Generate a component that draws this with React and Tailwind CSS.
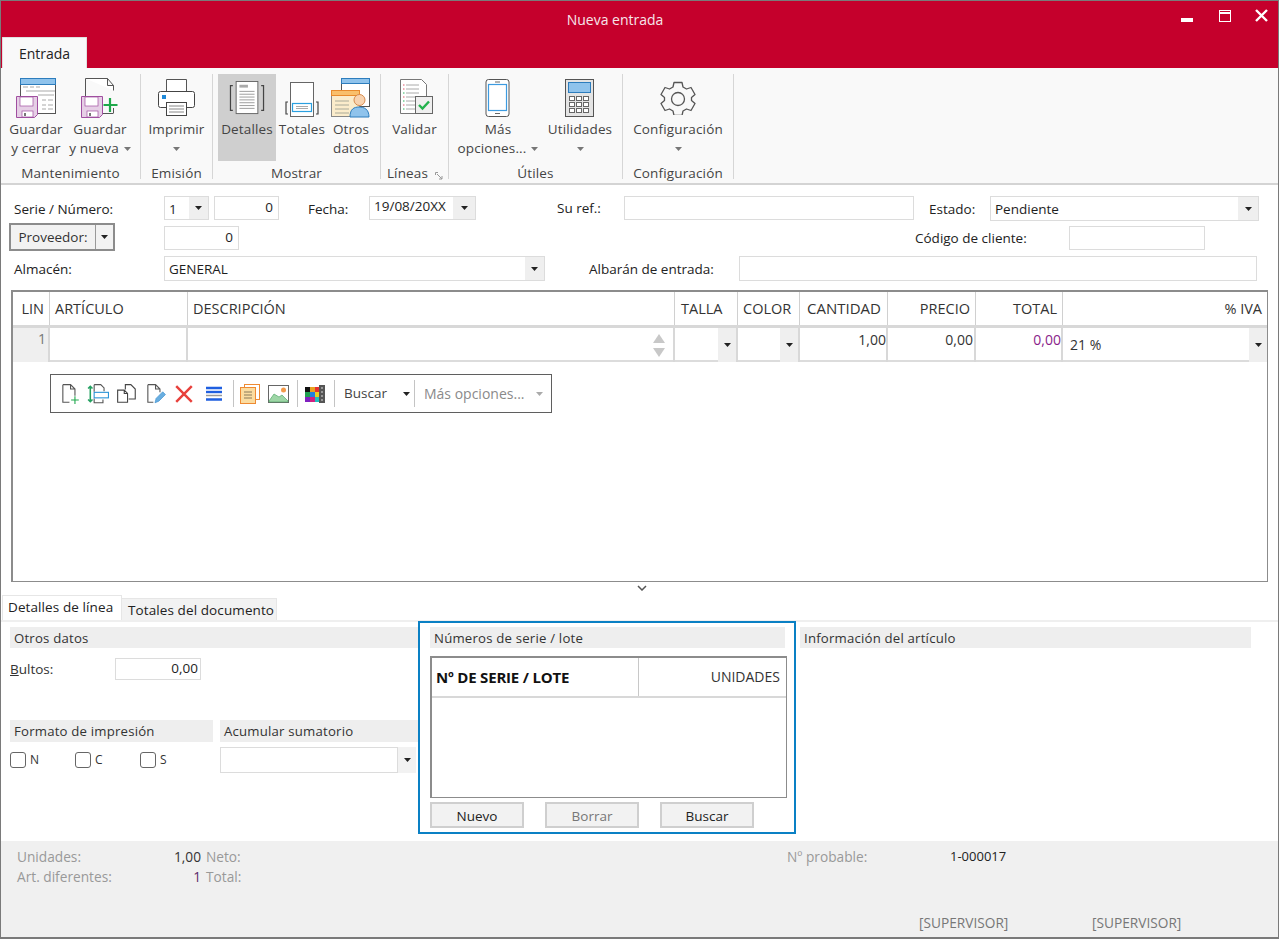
import React from 'react'

// Small arrow used by every combo box and ribbon button
function Caret({ className = 'fill-[#222]' }) {
  return (
    <svg width="7" height="4" viewBox="0 0 7 4" className={className}>
      <path d="M0 0h7L3.5 4z" />
    </svg>
  )
}

function Combo({ width, height = 'h-[25px]', text, box = 'w-[19px]', className = '', leading = 'leading-[25px]' }) {
  return (
    <div className={`flex ${width} ${height} border border-[#dcdcdc] bg-white ${className}`}>
      <span className={`flex-1 pl-[4px] ${leading} text-[#1e1e1e] whitespace-nowrap`}>{text}</span>
      <span className={`flex ${box} items-center justify-center bg-[#efefef]`}>
        <Caret />
      </span>
    </div>
  )
}

function Field({ width, height = 'h-[25px]', text, className = '' }) {
  return (
    <div className={`${width} ${height} border border-[#dcdcdc] bg-white pr-[5px] text-right leading-[21px] text-[#1e1e1e] ${className}`}>
      {text}
    </div>
  )
}

/* ---------- ribbon icons ---------- */
function Floppy({ x = 0, y = 0 }) {
  return (
    <g transform={`translate(${x} ${y})`}>
      <path d="M.5.5h21v18l-3 3H.5z" fill="#e6cfe6" stroke="#a04fa0" />
      <rect x="4" y="1" width="13" height="9" fill="#fff" stroke="#a04fa0" strokeWidth=".7" />
      <rect x="6" y="15" width="11" height="6" fill="#fff" stroke="#a04fa0" strokeWidth=".7" />
      <rect x="8" y="17" width="2" height="3" fill="#777" />
    </g>
  )
}

function IconSaveClose() {
  return (
    <svg width="40" height="42" viewBox="0 0 40 42">
      <rect x="4.5" y="1.5" width="35" height="35" fill="#fff" stroke="#555" />
      <rect x="4.5" y="1.5" width="35" height="6" fill="#8fc3ec" stroke="#2d7dbd" />
      <path d="M7 10h5M14 10h4M20 10h4M10 14h29M22 18h16M26 23h4M32 23h5M26 28h4M32 28h5M26 32h4M32 32h5" stroke="#aaa" strokeWidth="1.2" />
      <Floppy x="0" y="19" />
    </svg>
  )
}

function IconSaveNew() {
  return (
    <svg width="38" height="42" viewBox="0 0 38 42">
      <path d="M4.5 1.5h22l6 7v5M4.5 1.5v20M26.5 1.5v7h6" fill="#fff" stroke="#555" />
      <path d="M32.5 36.5H22M32.5 31v5" fill="none" stroke="#555" />
      <Floppy x="0" y="19" />
      <path d="M29 21v14M22.5 28h14" stroke="#1ea84a" strokeWidth="2.2" />
    </svg>
  )
}

function IconPrinter() {
  return (
    <svg width="40" height="40" viewBox="0 0 40 40">
      <path d="M9.5 14V1.5h20V14" fill="#fff" stroke="#555" />
      <rect x="1.5" y="13.5" width="36" height="16" rx="2" fill="#fff" stroke="#444" />
      <rect x="5" y="17" width="4" height="4" fill="#1e88d8" />
      <rect x="9.5" y="24.5" width="20" height="13" fill="#fff" stroke="#444" />
      <path d="M12 28h15M12 31h15M12 34h15" stroke="#888" />
    </svg>
  )
}

function IconDetails() {
  return (
    <svg width="36" height="34" viewBox="0 0 38 36">
      <path d="M4 5H1.5v26H4M34 5h2.5v26H34" fill="none" stroke="#444" strokeWidth="1.3" />
      <rect x="7.5" y=".5" width="23" height="34" fill="#fff" stroke="#666" />
      <rect x="11" y="4" width="9" height="3" fill="#aaa" />
      <path d="M11 11h16M11 14h16M11 17h16M11 20h16M11 23h16M11 26h16M11 29h16" stroke="#999" />
    </svg>
  )
}

function IconTotals() {
  return (
    <svg width="34" height="35" viewBox="0 0 34 35" className="mt-[3px]">
      <rect x="5.5" y=".5" width="23" height="34" fill="#fff" stroke="#666" />
      <path d="M3 20H1v12h2M31 20h2v12h-2" fill="none" stroke="#444" strokeWidth="1.2" />
      <rect x="7.5" y="21.5" width="19" height="8" fill="#fff" stroke="#2aa0e0" strokeWidth="1.2" />
      <path d="M11 24.500h12M11 26.500h12" stroke="#aaa" />
    </svg>
  )
}

function IconOther() {
  return (
    <svg width="40" height="40" viewBox="0 0 40 40">
      <rect x="10.500" y=".5" width="28" height="28" fill="#fff" stroke="#555" />
      <rect x="10.500" y=".5" width="28" height="5" fill="#8fc3ec" stroke="#2d7dbd" />
      <rect x=".5" y="12.500" width="28" height="26" fill="#fbeccb" stroke="#888" />
      <rect x=".5" y="12.500" width="28" height="5" fill="#f9bf6b" stroke="#e98a2c" />
      <path d="M4 23h14M4 27h14M4 31h14M4 35h14" stroke="#aa9" />
      <path d="M19 39c0-8 4-10 9-10s10 2 10 10z" fill="#8fc3ec" stroke="#2d7dbd" />
      <circle cx="28.500" cy="22" r="5.500" fill="#f8d3b0" stroke="#d68b4e" />
    </svg>
  )
}

function IconValidate() {
  return (
    <svg width="36" height="38" viewBox="0 0 36 38" className="ml-[3px]">
      <path d="M2.500.5h21l5 5V34.500h-26z" fill="#fff" stroke="#777" />
      <path d="M8 6h13M8 10h13M8 14h13M8 18h13M8 22h13M8 26h13M8 30h13" stroke="#aaa" />
      <path d="M5 6h1.500M5 10h1.500M5 18h1.500M5 26h1.500" stroke="#e0556a" />
      <path d="M5 14h1.500M5 22h1.500M5 30h1.500" stroke="#2fb45c" />
      <rect x="17.500" y="17.500" width="17" height="17" fill="#efefef" stroke="#666" />
      <path d="M21 26l3.500 3.500 6.500-7" fill="none" stroke="#22b14c" strokeWidth="2.400" />
    </svg>
  )
}

function IconTablet() {
  return (
    <svg width="26" height="38" viewBox="0 0 26 38">
      <rect x="1" y=".5" width="23" height="37" rx="2.500" fill="#fff" stroke="#555" />
      <rect x="3.500" y="5.500" width="18" height="26" fill="#fff" stroke="#3d9be0" strokeWidth="1.200" />
      <path d="M10 3h5M10 34.500h5" stroke="#666" />
    </svg>
  )
}

function IconCalc() {
  const keys = []
  for (let r = 0; r < 3; r++) {
    for (let c = 0; c < 3; c++) {
      keys.push(<rect key={`${r}-${c}`} x={4.500 + c * 7} y={17.500 + r * 6} width="5" height="4" fill="#fff" stroke="#666" />)
    }
  }
  return (
    <svg width="30" height="38" viewBox="0 0 30 38">
      <rect x=".5" y=".5" width="28" height="37" fill="#e4e4e4" stroke="#555" />
      <rect x="3.500" y="3.500" width="22" height="10" fill="#8fc3ec" stroke="#2d7dbd" />
      {keys}
    </svg>
  )
}

function IconGear() {
  return (
    <svg width="36" height="34" viewBox="0 0 36 34" fill="none" stroke="#555" strokeWidth="1.300">
      <path d="M14 1.500h8l1 4.500 3.500 2 4.500-1.500 4 7-3.500 3v3l3.500 3-4 7-4.500-1.500-3.500 2-1 4.500h-8l-1-4.500-3.500-2L5 29.500l-4-7 3.500-3v-3L1 13.500l4-7L9.500 8 13 6z" strokeLinejoin="round" />
      <circle cx="18" cy="18" r="6.500" />
    </svg>
  )
}

function RibbonButton({ icon, line1, line2, width, caret, active }) {
  return (
    <div className={`flex ${width} h-[87px] flex-col items-center ${active ? 'bg-[#cfcfcf]' : ''}`}>
      <div className="flex h-[44px] items-center justify-center pt-[3px]">{icon}</div>
      <div className="mt-[2px] leading-[19px] whitespace-nowrap text-[#444]">{line1}</div>
      <div className="flex h-[19px] items-center gap-[5px] leading-[19px] whitespace-nowrap text-[#444]">
        {line2 && <span>{line2}</span>}
        {caret && <Caret className="fill-[#777]" />}
      </div>
    </div>
  )
}

function RibbonGroup({ width, label, children, pad = '', noteIcon }) {
  return (
    <div className={`relative flex ${width} h-[105px] flex-col border-r border-[#d6d6d6]`}>
      <div className={`flex h-[88px] ${pad}`}>{children}</div>
      <div className="mt-[3px] text-center leading-[18px] text-[#444] whitespace-nowrap">{label}</div>
      {noteIcon && (
        <svg width="8" height="8" viewBox="0 0 8 8" className="absolute right-[5px] bottom-[-1px]" fill="none" stroke="#999">
          <path d="M.5 3V.5H3M2 2l5 5M7 4v3H4" />
        </svg>
      )}
    </div>
  )
}

function Ribbon() {
  return (
    <div className="flex h-[117px] border-b-2 border-[#d4d4d4] bg-[#f9f9f9] pt-[6px] text-[13.5px] tracking-[.15px]">
      <RibbonGroup width="w-[140px]" label="Mantenimiento" pad="pl-[3px]">
        <RibbonButton width="w-[64px]" icon={<IconSaveClose />} line1="Guardar" line2="y cerrar" />
        <RibbonButton width="w-[64px]" icon={<IconSaveNew />} line1="Guardar" line2="y nueva" caret />
      </RibbonGroup>
      <RibbonGroup width="w-[72px]" label="Emisión">
        <RibbonButton width="w-[71px]" icon={<IconPrinter />} line1="Imprimir" caret />
      </RibbonGroup>
      <RibbonGroup width="w-[168px]" label="Mostrar" pad="pl-[5px]">
        <RibbonButton width="w-[58px]" active icon={<IconDetails />} line1="Detalles" />
        <RibbonButton width="w-[52px]" icon={<IconTotals />} line1="Totales" />
        <RibbonButton width="w-[46px]" icon={<IconOther />} line1="Otros" line2="datos" />
      </RibbonGroup>
      <RibbonGroup width="w-[68px]" label={<span className="pr-[14px]">Líneas</span>} noteIcon>
        <RibbonButton width="w-[67px]" icon={<IconValidate />} line1="Validar" />
      </RibbonGroup>
      <RibbonGroup width="w-[174px]" label="Útiles" pad="pl-[6px]">
        <RibbonButton width="w-[86px]" icon={<IconTablet />} line1="Más" line2="opciones..." caret />
        <RibbonButton width="w-[78px]" icon={<IconCalc />} line1="Utilidades" caret />
      </RibbonGroup>
      <RibbonGroup width="w-[111px]" label="Configuración">
        <RibbonButton width="w-[110px]" icon={<IconGear />} line1="Configuración" caret />
      </RibbonGroup>
    </div>
  )
}

/* ---------- floating toolbar icons ---------- */
function ToolPage({ children }) {
  return (
    <svg width="22" height="22" viewBox="0 0 20 20" fill="none">
      {children}
    </svg>
  )
}

const pageOutline = 'M3.500 1.500h7l4 4v6M3.500 1.500v16h6M10.500 1.500v4h4'

function ToolSep({ className = '' }) {
  return <span className={`h-[27px] w-[1px] shrink-0 bg-[#c4c4c4] ${className}`} />
}

function LineToolbar() {
  return (
    <div className="ml-[37px] mt-[12px] flex h-[39px] w-[502px] items-center border border-[#5f5f5f] bg-white pl-[8px]">
      <ToolPage>
        <path d={pageOutline} stroke="#555" />
        <path d="M14.500 12v7M11 15.500h7" stroke="#22a94f" />
      </ToolPage>
      <span className="ml-[6px] flex">
        <ToolPage>
          <path d="M6.500 1.500h6l3 3v3M6.500 1.500V8M6.500 14v4h8v-3" stroke="#555" />
          <rect x="6.500" y="8.500" width="13" height="5" fill="#fff" stroke="#2d95d8" />
          <path d="M3 3v14M1 5l2-2 2 2M1 15l2 2 2-2" stroke="#22a060" strokeWidth="1.400" />
        </ToolPage>
      </span>
      <span className="ml-[7px] flex">
        <ToolPage>
          <path d="M1.500 6.500h6l3 3v8h-9zM7.500 6.500v3h3" stroke="#444" />
          <path d="M8.500 6V1.500h5l4 4v9h-6" stroke="#444" />
        </ToolPage>
      </span>
      <span className="ml-[6px] flex">
        <ToolPage>
          <path d="M3.500 1.500h7l4 4v3M3.500 1.500v16h5M10.500 1.500v4h4" stroke="#555" />
          <path d="M10 18l1-4 6-6 2.500 2.500-6 6z" fill="#69aee0" stroke="#3c8fd0" strokeWidth=".6" />
        </ToolPage>
      </span>
      <svg width="20" height="20" viewBox="0 0 18 18" className="ml-[8px]">
        <path d="M2 2l14 14M16 2L2 16" stroke="#e8413c" strokeWidth="2.200" />
      </svg>
      <svg width="18" height="18" viewBox="0 0 18 18" className="ml-[11px]">
        <path d="M1 3h16M1 14.500h16" stroke="#1f5fe0" strokeWidth="2.400" />
        <path d="M1 7h16" stroke="#1f5fe0" strokeWidth="2.400" />
        <path d="M1 10.500h16" stroke="#999" strokeWidth="1.500" />
      </svg>
      <ToolSep className="ml-[10px]" />
      <svg width="20" height="20" viewBox="0 0 20 20" className="ml-[6px]">
        <rect x="4.500" y=".5" width="15" height="15" fill="#fff" stroke="#ee8a32" />
        <rect x=".5" y="3.500" width="15" height="16" fill="#fbdca0" stroke="#ee8a32" />
        <path d="M4 8h8M4 11h8M4 14h8" stroke="#8a7a5a" />
      </svg>
      <svg width="21" height="18" viewBox="0 0 21 18" className="ml-[8px]">
        <rect x=".5" y=".5" width="20" height="17" fill="#fff" stroke="#666" />
        <path d="M1 16l5-7 5 3 3-2 6 6v1H1z" fill="#9ed6a6" stroke="#55a86a" strokeWidth=".7" />
        <circle cx="15.500" cy="5" r="2.500" fill="#f39a4a" />
      </svg>
      <ToolSep className="ml-[8px]" />
      <svg width="20" height="20" viewBox="0 0 20 20" className="ml-[7px]">
        <rect x="0" y="3" width="5" height="5" fill="#111" />
        <rect x="5" y="3" width="5" height="5" fill="#e8a020" />
        <rect x="10" y="3" width="4" height="5" fill="#e53030" />
        <rect x="0" y="8" width="5" height="5" fill="#20a050" />
        <rect x="5" y="8" width="5" height="5" fill="#2080e0" />
        <rect x="10" y="8" width="4" height="5" fill="#e8d020" />
        <rect x="0" y="13" width="5" height="5" fill="#8020c0" />
        <rect x="5" y="13" width="5" height="5" fill="#d02080" />
        <rect x="10" y="13" width="4" height="5" fill="#20c0c0" />
        <rect x="14" y="1" width="6" height="18" fill="#555" />
        <path d="M17 3v14" stroke="#ddd" strokeDasharray="2 2" />
      </svg>
      <ToolSep className="ml-[9px]" />
      <span className="ml-[9px] w-[59px] text-[13.500px] text-[#444]">Buscar</span>
      <span className="flex"><Caret /></span>
      <ToolSep className="ml-[4px]" />
      <span className="ml-[9px] w-[112px] text-[14px] whitespace-nowrap text-[#8a8a8a]">Más opciones...</span>
      <span className="flex"><Caret className="fill-[#aaa]" /></span>
    </div>
  )
}

/* ---------- lines grid ---------- */
const cols = 'grid-cols-[37px_138px_487px_63px_62px_88px_88px_87px_1fr]'

function HeadCell({ children, right, className = 'px-[5px]' }) {
  return (
    <div className={`overflow-hidden whitespace-nowrap border-r border-[#d0d0d0] leading-[33px] text-[#333] ${className} ${right ? 'text-right' : ''}`}>
      {children}
    </div>
  )
}

function LinesTable() {
  return (
    <div className="mx-[10px] mt-[9px] h-[292px] border-2 border-[#8c8c8c] border-b-[1px] border-r-[1px] bg-white text-[14px]">
      <div className={`grid h-[33px] ${cols} border-b-[3px] border-[#d8d8d8] box-content text-[14.500px]`}>
        <HeadCell right>LIN</HeadCell>
        <HeadCell>ARTÍCULO</HeadCell>
        <HeadCell>DESCRIPCIÓN</HeadCell>
        <HeadCell className="pl-[6px]">TALLA</HeadCell>
        <HeadCell>COLOR</HeadCell>
        <HeadCell className="pl-[7px] text-[15px]">CANTIDAD</HeadCell>
        <HeadCell right>PRECIO</HeadCell>
        <HeadCell right>TOTAL</HeadCell>
        <div className="px-[5px] text-right leading-[33px] text-[#333]">% IVA</div>
      </div>
      <div className={`grid h-[34px] ${cols} border-b-[2px] border-[#dcdcdc] text-[#333]`}>
        <div className="border-r-2 border-[#d8d8d8] bg-[#efefef] px-[2px] text-right leading-[21px] text-[#777]">1</div>
        <div className="border-r-2 border-[#d8d8d8]" />
        <div className="flex items-center justify-end border-r-2 border-[#d8d8d8] pr-[8px]">
          <div className="flex flex-col gap-[5px]">
            <svg width="12" height="9" viewBox="0 0 12 9" className="fill-[#c8c8c8]"><path d="M6 0l6 9H0z" /></svg>
            <svg width="12" height="9" viewBox="0 0 12 9" className="fill-[#c8c8c8]"><path d="M0 0h12L6 9z" /></svg>
          </div>
        </div>
        <div className="flex justify-end border-r-2 border-[#d8d8d8]">
          <span className="flex w-[18px] items-center justify-center bg-[#efefef]"><Caret /></span>
        </div>
        <div className="flex justify-end border-r-2 border-[#d8d8d8]">
          <span className="flex w-[18px] items-center justify-center bg-[#efefef]"><Caret /></span>
        </div>
        <div className="border-r-2 border-[#d8d8d8] text-right leading-[23px]">1,00</div>
        <div className="border-r-2 border-[#d8d8d8] pr-[1px] text-right leading-[23px]">0,00</div>
        <div className="border-r-2 border-[#d8d8d8] text-right leading-[23px] text-[#8a1e8a]">0,00</div>
        <div className="flex pl-[7px]">
          <span className="flex-1 leading-[34px]">21 %</span>
          <span className="flex w-[18px] items-center justify-center bg-[#efefef]"><Caret /></span>
        </div>
      </div>
      <LineToolbar />
    </div>
  )
}

function SectionTitle({ className = '', children }) {
  return <div className={`h-[21px] bg-[#eeeeee] pl-[4px] text-[13.200px] leading-[22px] text-[#333] tracking-[.2px] ${className}`}>{children}</div>
}

function CheckItem({ label, width }) {
  return (
    <div className={`flex ${width} items-center gap-[4px]`}>
      <span className="h-[16px] w-[16px] rounded-[3px] border border-[#666] bg-white" />
      <span className="text-[12px] text-[#333]">{label}</span>
    </div>
  )
}

function SerialButton({ children, disabled }) {
  return (
    <div className={`flex h-[26px] w-[94px] items-center justify-center border-2 border-[#cfcfcf] bg-[#f2f2f2] pt-[3px] ${disabled ? 'text-[#777]' : 'text-[#222]'}`}>
      {children}
    </div>
  )
}

function DetailPanels() {
  return (
    <div className="flex h-[220px]">
      <div className="ml-[9px] w-[408px] pt-[6px]">
        <SectionTitle>Otros datos</SectionTitle>
        <div className="mt-[10px] flex items-start">
          <span className="w-[105px] leading-[23px] text-[#333]"><span className="underline">B</span>ultos:</span>
          <Field width="w-[86px]" height="h-[22px]" text="0,00" className="!leading-[18px] !pr-[2px]" />
        </div>
        <div className="mt-[39px] flex gap-[7px]">
          <SectionTitle className="h-[22px] w-[203px]">Formato de impresión</SectionTitle>
          <SectionTitle className="h-[22px] w-[198px]">Acumular sumatorio</SectionTitle>
        </div>
        <div className="mt-[5px] flex">
          <div className="flex w-[210px] items-center">
            <CheckItem label="N" width="w-[65px]" />
            <CheckItem label="C" width="w-[65px]" />
            <CheckItem label="S" width="w-[65px]" />
          </div>
          <div className="flex h-[26px] w-[196px]">
            <div className="w-[178px] border border-[#dcdcdc] bg-white" />
            <span className="flex flex-1 items-center justify-center bg-[#f2f2f2]"><Caret /></span>
          </div>
        </div>
      </div>
      {/* highlighted block */}
      <div className="h-[213px] w-[378px] border-2 border-[#0a80c4] px-[10px] pt-[4px]">
        <SectionTitle className="w-[355px]">Números de serie / lote</SectionTitle>
        <div className="mt-[8px] h-[142px] w-[357px] border-2 border-[#8c8c8c] border-b-[1px] border-r-[1px] bg-white">
          <div className="flex h-[40px] border-b-2 border-[#d8d8d8] text-[14px] leading-[38px]">
            <div className="w-[207px] border-r border-[#c8c8c8] pl-[4px] text-[15px] font-bold text-[#111] tracking-[-.2px] whitespace-nowrap">Nº DE SERIE / LOTE</div>
            <div className="flex-1 pr-[6px] text-right text-[#333]">UNIDADES</div>
          </div>
        </div>
        <div className="mt-[4px] flex gap-[21px]">
          <SerialButton>Nuevo</SerialButton>
          <SerialButton disabled>Borrar</SerialButton>
          <SerialButton>Buscar</SerialButton>
        </div>
      </div>
      <div className="ml-[4px] w-[451px] pt-[6px]">
        <SectionTitle>Información del artículo</SectionTitle>
      </div>
    </div>
  )
}

function StatusBar() {
  return (
    <div className="flex h-[97px] flex-col bg-[#f0f0f0] pl-[16px] text-[13.700px] text-[#999]">
      <div className="mt-[6px] flex h-[20px] items-center">
        <span className="w-[130px]">Unidades:</span>
        <span className="w-[54px] text-right text-[#333]">1,00</span>
        <span className="ml-[5px] w-[581px]">Neto:</span>
        <span className="w-[163px]">Nº probable:</span>
        <span className="text-[13px] text-[#222]">1-000017</span>
      </div>
      <div className="flex h-[20px] items-center">
        <span className="w-[130px]">Art. diferentes:</span>
        <span className="w-[54px] text-right text-[#5a2a6a]">1</span>
        <span className="ml-[5px]">Total:</span>
      </div>
      <div className="mt-[27px] flex h-[18px] items-center pl-[902px] text-[#777]">
        <span className="w-[173px]">[SUPERVISOR]</span>
        <span>[SUPERVISOR]</span>
      </div>
    </div>
  )
}

export default function App() {
  return (
    <div className="h-[939px] w-[1279px] overflow-hidden border-x border-t border-b-2 border-[#7a7a7a] bg-white font-['Open_Sans','Noto_Sans',sans-serif] text-[13.500px]">
      {/* title bar */}
      <div className="relative h-[67px] bg-[#c5002c]">
        <div className="pt-[10px] pr-[49px] text-center text-[14px] leading-[18px] text-[#f6e6ea]">Nueva entrada</div>
        <div className="absolute top-[8px] right-[10px] flex items-center">
          <svg width="12" height="12" viewBox="0 0 12 12"><path d="M0 8h12v4H0z" fill="#fff" /></svg>
          <svg width="12" height="12" viewBox="0 0 12 12" fill="none" stroke="#fff" className="ml-[26px]"><rect x=".5" y=".5" width="11" height="11" /><path d="M0 3h12" strokeWidth="2" /></svg>
          <svg width="13" height="13" viewBox="0 0 13 13" className="ml-[24px]"><path d="M1 1l11 11M12 1L1 12" stroke="#fff" strokeWidth="2.400" /></svg>
        </div>
        <div className="absolute bottom-0 left-[1px] h-[31px] w-[85px] rounded-t-[1px] border border-b-0 border-[#e0e0e0] bg-[#f9f9f9] text-center text-[14px] leading-[31px] text-[#222]">
          Entrada
        </div>
      </div>

      <Ribbon />

      {/* header form */}
      <div className="px-[13px] pt-[11px] text-[#222]">
        <div className="flex h-[24px] items-start">
          <span className="w-[150px] leading-[27px]">Serie / Número:</span>
          <Combo width="w-[45px]" height="h-[24px]" text="1" leading="leading-[24px]" />
          <Field width="w-[65px]" height="h-[24px]" text="0" className="ml-[5px]" />
          <span className="ml-[29px] w-[61px] leading-[27px]">Fecha:</span>
          <Combo width="w-[107px]" height="h-[24px]" text="19/08/20XX" box="w-[22px]" leading="leading-[19px]" />
          <span className="ml-[81px] w-[67px] leading-[25px]">Su ref.:</span>
          <Field width="w-[290px]" height="h-[24px]" />
          <span className="ml-[15px] w-[61px] leading-[27px]">Estado:</span>
          <Combo width="w-[269px]" text="Pendiente" box="w-[20px]" />
        </div>
        <div className="mt-[3px] flex h-[28px] items-start">
          <div className="-ml-[5px] flex h-[28px] w-[106px] border-2 border-[#8c8c8c] bg-[#f2f2f2]">
            <span className="flex-1 text-center leading-[24px] text-[#333]">Proveedor:</span>
            <span className="flex w-[18px] items-center justify-center border-l border-[#999]"><Caret /></span>
          </div>
          <Field width="w-[75px]" height="h-[24px]" text="0" className="ml-[49px] mt-[3px]" />
          <span className="ml-[676px] w-[154px] leading-[30px]">Código de cliente:</span>
          <Field width="w-[136px]" height="h-[24px]" className="mt-[3px]" />
        </div>
        <div className="mt-[5px] flex h-[25px] items-center">
          <span className="w-[150px] pt-[2px]">Almacén:</span>
          <Combo width="w-[381px]" text="GENERAL" />
          <span className="ml-[44px] w-[150px] whitespace-nowrap pt-[2px]">Albarán de entrada:</span>
          <Field width="w-[518px]" />
        </div>
      </div>

      <LinesTable />

      {/* splitter */}
      <div className="flex h-[12px] items-center justify-center">
        <svg width="10" height="6" viewBox="0 0 10 6" fill="none" stroke="#555" strokeWidth="1.500" className="ml-[4px]">
          <path d="M1 1l4 4 4-4" />
        </svg>
      </div>

      {/* detail tabs */}
      <div className="flex h-[28px] items-end border-b-2 border-[#efefef] pl-[1px] -mb-[1px]">
        <div className="h-[25px] w-[120px] border border-b-0 border-[#e6e6e6] bg-white pl-[5px] leading-[23px] tracking-[.1px] text-[#222]">Detalles de línea</div>
        <div className="h-[22px] w-[155px] border-t border-r border-[#e6e6e6] bg-[#f2f2f2] pl-[6px] leading-[23px] tracking-[.1px] text-[#222]">Totales del documento</div>
      </div>

      <DetailPanels />
      <StatusBar />
    </div>
  )
}
